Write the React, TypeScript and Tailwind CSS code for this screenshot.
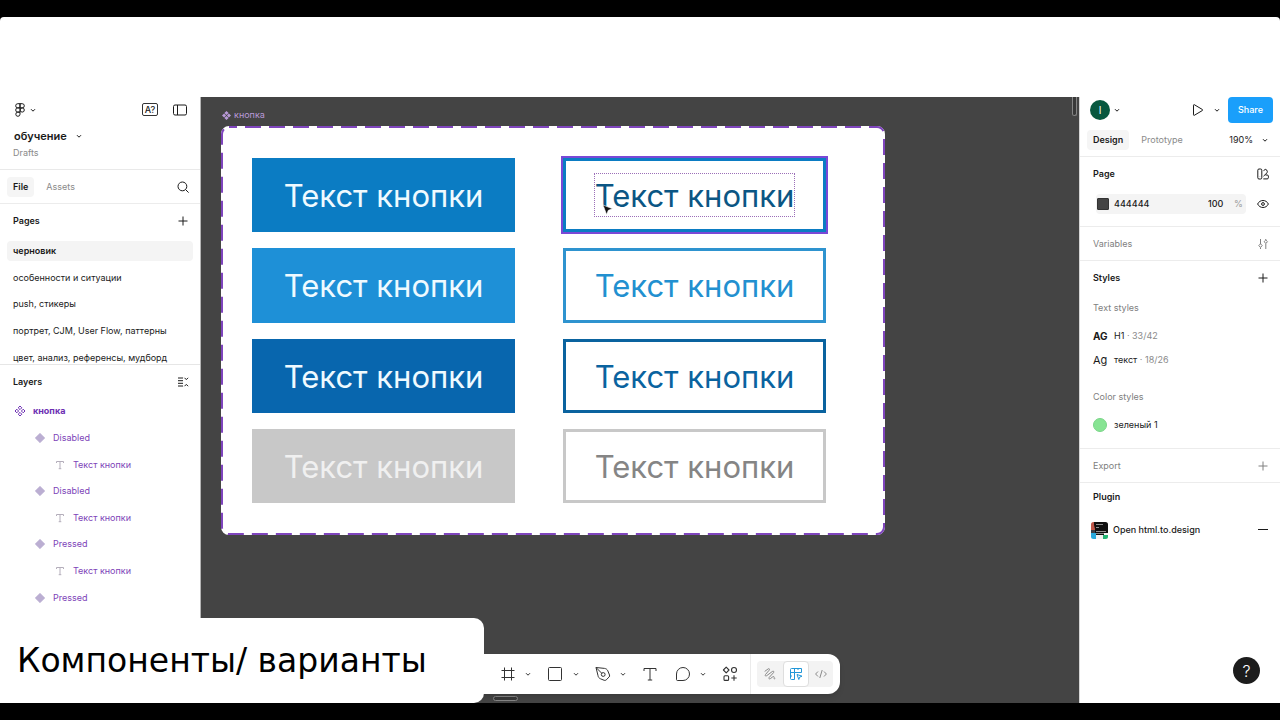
import React from 'react';

type IconProps = { className?: string };

const Chevron = ({ className = '' }: IconProps) => (
  <svg className={`h-2 w-2 shrink-0 ${className}`} viewBox="0 0 8 8" fill="none" stroke="currentColor" strokeWidth="1">
    <path d="M2 3.2l2 2 2-2" />
  </svg>
);

const FigmaIcon = () => (
  <svg className="h-4 w-3" viewBox="0 0 12 16" fill="none" stroke="currentColor" strokeWidth="1">
    <path d="M6 1.7H3.8a2.1 2.1 0 000 4.2H6zM6 1.7h2.2a2.1 2.1 0 010 4.2H6zM6 5.9H3.8a2.1 2.1 0 000 4.2H6zM3.8 10.1A2.1 2.1 0 106 12.2v-2.1z" />
    <circle cx="8.2" cy="8" r="2.1" />
  </svg>
);

const PanelIcon = () => (
  <svg className="h-4 w-4" viewBox="0 0 16 16" fill="none" stroke="currentColor" strokeWidth="1">
    <rect x="1.5" y="3" width="13" height="10" rx="1.5" />
    <path d="M5.5 3v10" />
  </svg>
);

const SearchIcon = () => (
  <svg className="h-3 w-3" viewBox="0 0 12 12" fill="none" stroke="currentColor" strokeWidth="1">
    <circle cx="5.4" cy="5.4" r="4.4" />
    <path d="M8.6 8.6l3 3" />
  </svg>
);

const PlusIcon = ({ className = '' }: IconProps) => (
  <svg className={`h-3 w-3 ${className}`} viewBox="0 0 12 12" fill="none" stroke="currentColor" strokeWidth="1">
    <path d="M6 1.5v9M1.5 6h9" />
  </svg>
);

const CollapseIcon = () => (
  <svg className="h-3 w-3" viewBox="0 0 12 12" fill="none" stroke="currentColor" strokeWidth="1">
    <path d="M1 2h5M1 4.7h5M1 7.3h5M1 10h5M7.5 1.8l1.8 1.8 1.8-1.8M7.5 10.2l1.8-1.8 1.8 1.8" />
  </svg>
);

const ComponentSetIcon = ({ className = '' }: IconProps) => (
  <svg className={className} viewBox="0 0 12 12" fill="none" stroke="currentColor" strokeWidth="1">
    <path d="M6 1l1.8 1.8L6 4.6 4.2 2.8zM6 7.4l1.8 1.8L6 11 4.2 9.2zM2.8 4.2L4.6 6 2.8 7.8 1 6zM9.2 4.2L11 6 9.2 7.8 7.4 6z" />
  </svg>
);

const ComponentSetSolid = ({ className = '' }: IconProps) => (
  <svg className={className} viewBox="0 0 12 12" fill="currentColor">
    <path d="M6 0l2.800 2.800L6 5.400 3.200 2.800zM6 6.600l2.800 2.600L6 12 3.200 9.200zM2.800 3.200L5.400 6 2.800 8.800 0 6zM9.200 3.200L12 6 9.200 8.800 6.600 6z" />
  </svg>
);

const VariantIcon = () => (
  <svg className="h-3 w-3 text-[#bbaed2]" viewBox="0 0 12 12" fill="currentColor">
    <path d="M6 1.2L10.8 6 6 10.8 1.2 6z" stroke="currentColor" strokeWidth=".6" strokeLinejoin="round" />
  </svg>
);

const TextLayerIcon = () => (
  <svg className="h-3 w-3 text-[#b4aebb]" viewBox="0 0 12 12" fill="none" stroke="currentColor" strokeWidth="1">
    <path d="M2.5 4V2.5h7V4M6 2.5v7.2M4.7 9.7h2.6" />
  </svg>
);

const PlayIcon = () => (
  <svg className="h-4 w-4" viewBox="0 0 16 16" fill="none" stroke="currentColor" strokeWidth="1" strokeLinejoin="round">
    <path d="M3.5 3.2v9.6c0 .5.4.7.8.5l8.1-4.8c.4-.2.4-.7 0-1L4.3 2.7c-.4-.2-.8 0-.8.5z" />
  </svg>
);

const LibraryIcon = () => (
  <svg className="h-3 w-3" viewBox="0 0 12 12" fill="none" stroke="currentColor" strokeWidth="1" strokeLinejoin="round">
    <rect x=".8" y="1" width="4" height="10" rx="1.2" />
    <path d="M6.5 2.6l1.7-1.1c.5-.3 1-.2 1.3.3l.8 1.6c.2.5.1 1-.3 1.4L6.5 8.2M8.5 7h1.7c.7 0 1.2.4 1.2 1.1v1.6c0 .7-.5 1.2-1.2 1.2H6.3" />
    <path d="M2.8 8.8v.2" />
  </svg>
);

const EyeIcon = () => (
  <svg className="h-3 w-3" viewBox="0 0 12 12" fill="none" stroke="currentColor" strokeWidth="1">
    <path d="M.6 6C1.8 3.7 3.7 2.5 6 2.5S10.2 3.7 11.4 6C10.2 8.3 8.3 9.5 6 9.5S1.8 8.3.6 6z" />
    <circle cx="6" cy="6" r="1.4" />
  </svg>
);

const SlidersIcon = () => (
  <svg className="h-3 w-3" viewBox="0 0 12 12" fill="none" stroke="currentColor" strokeWidth="1">
    <path d="M3.5 1v5M3.5 9.5V11M8.8 1v1M8.8 5.500V11" />
    <path d="M3.5 5.8l1.7 1.8-1.7 1.8-1.7-1.8zM8.8 2l1.7 1.7-1.7 1.7-1.7-1.7z" />
  </svg>
);

const PluginIcon = () => (
  <svg className="h-[17px] w-[17px]" viewBox="0 0 17 17">
    <rect width="17" height="17" rx="2.5" fill="#f2f2f2" />
    <path d="M0 2.5A2.5 2.5 0 012.5 0H5v8H0z" fill="#c0584a" />
    <path d="M3 0h11.5A2.5 2.5 0 0117 2.5V11H4V7L3 3z" fill="#101010" />
    <path d="M0 8h4v3H0z" fill="#3b3f46" />
    <path d="M0 11h5v6H2.5A2.5 2.5 0 010 14.5z" fill="#28a9dc" />
    <path d="M12 13h5v1.5a2.5 2.5 0 01-2.5 2.5H12z" fill="#22b573" />
    <path d="M5 2.500h7M5 5.500h3M5 9.500h10" stroke="#8f8f8f" strokeWidth="1" />
    <path d="M5 11.500h8v1.500H5z" fill="#101010" />
  </svg>
);

const FrameIcon = () => (
  <svg className="h-4 w-4" viewBox="0 0 16 16" fill="none" stroke="currentColor" strokeWidth="1">
    <path d="M4.5 1.5v13M11.5 1.5v13M1.5 4.5h13M1.5 11.5h13" />
  </svg>
);

const SquareIcon = () => (
  <svg className="h-4 w-4" viewBox="0 0 16 16" fill="none" stroke="currentColor" strokeWidth="1">
    <rect x="1.5" y="1.5" width="13" height="13" rx="1" />
  </svg>
);

const PenIcon = () => (
  <svg className="h-4 w-4" viewBox="0 0 16 16" fill="none" stroke="currentColor" strokeWidth="1" strokeLinejoin="round">
    <path d="M1 1.500l8.500.9c1.500.2 2.700 1 3.300 2.400l1.700 4.200c.3.8.1 1.500-.4 2l-2.900 2.900c-.6.5-1.300.7-2 .4l-3.700-1.500C4 12.200 3.200 11 3 9.600zM1.200 1.700l5.500 5.500" />
    <circle cx="8.2" cy="8.5" r="1.9" />
  </svg>
);

const TextIcon = () => (
  <svg className="h-4 w-4" viewBox="0 0 16 16" fill="none" stroke="currentColor" strokeWidth="1">
    <path d="M2 5V2.500h12V5M8 2.500v11.500M5.800 14h4.400" />
  </svg>
);

const CommentIcon = () => (
  <svg className="h-4 w-4" viewBox="0 0 16 16" fill="none" stroke="currentColor" strokeWidth="1" strokeLinejoin="round">
    <path d="M8 1.500a6.500 6.500 0 110 13H2.300c-.4 0-.8-.4-.8-.8V8A6.500 6.500 0 018 1.500z" />
  </svg>
);

const ActionsIcon = () => (
  <svg className="h-4 w-4" viewBox="0 0 16 16" fill="none" stroke="currentColor" strokeWidth="1.1" strokeLinejoin="round">
    <path d="M4.200 1.200L7 4 4.200 6.800 1.400 4z" />
    <circle cx="12" cy="4" r="2.5" />
    <rect x="2" y="9.8" width="4.6" height="4.6" rx="1" />
    <path d="M12 9.300v5.400M9.300 12h5.400" />
  </svg>
);

const DrawIcon = () => (
  <svg className="h-3.5 w-3.5" viewBox="0 0 14 14" fill="none" stroke="currentColor" strokeWidth="1" strokeLinecap="round" strokeLinejoin="round">
    <path d="M2 4.200L5 2c1.200-.9 2 .2 1.200 1.200L2.500 7.500c-.9 1.100.1 2 1.200 1.200l5.600-4.200c1.200-.9 2.100.2 1.200 1.200l-4.300 4.700c-.9 1.100.1 2 1.200 1.200l2.400-1.800c1-.7 1.800.1 1.300 1-.5.8.1 1.300.8.9" />
  </svg>
);

const DesignModeIcon = () => (
  <svg className="h-3.5 w-3.5" viewBox="0 0 14 14" fill="none" stroke="currentColor" strokeWidth="1" strokeLinejoin="round">
    <path d="M5.500 12.500h-3a1 1 0 01-1-1v-9a1 1 0 011-1h10v4h-7zM5.500 1.500v4h-4M9 1.500V3M1.500 9H3M8 7.500l5 1.700-2.300.9-.9 2.400z" />
  </svg>
);

const CodeIcon = () => (
  <svg className="h-3 w-3" viewBox="0 0 12 12" fill="none" stroke="currentColor" strokeWidth="1">
    <path d="M3 3.500L.6 6 3 8.500M9 3.500L11.400 6 9 8.500M7.200 2L4.800 10" />
  </svg>
);

const pages = [
  'черновик',
  'особенности и ситуации',
  'push, стикеры',
  'портрет, CJM, User Flow, паттерны',
  'цвет, анализ, референсы, мудборд',
];

const layers = [
  { name: 'Disabled', type: 'variant' },
  { name: 'Текст кнопки', type: 'text' },
  { name: 'Disabled', type: 'variant' },
  { name: 'Текст кнопки', type: 'text' },
  { name: 'Pressed', type: 'variant' },
  { name: 'Текст кнопки', type: 'text' },
  { name: 'Pressed', type: 'variant' },
];

const variants = [
  'bg-[#0b7cc3] text-[#effaff]',
  'border-3 border-[#0b7cc3] text-[#0b5684] outline-2 outline-[#7a48d6]',
  'bg-[#1e90d7] text-[#effaff]',
  'border-3 border-[#2e93cf] text-[#2290d0]',
  'bg-[#0866ae] text-[#effaff]',
  'border-3 border-[#0a639f] text-[#0a639f]',
  'bg-[#c8c8c8] text-[#f0f0f0]',
  'border-3 border-[#c8c8c8] text-[#858585]',
];

const LeftPanel = () => (
  <aside className="w-[201px] shrink-0 border-r border-[#b5b5b5] bg-white">
    <div className="flex h-[25px] items-center pr-3 pl-[14px]">
      <button aria-label="Main menu" className="flex items-center gap-[3px]">
        <FigmaIcon />
        <Chevron />
      </button>
      <button aria-label="Missing fonts" className="ml-auto flex h-[13px] w-4 items-center justify-center rounded-[2px] border border-[#333] text-[9px] leading-none font-medium">
        A?
      </button>
      <button aria-label="Toggle panels" className="ml-3.5">
        <PanelIcon />
      </button>
    </div>
    <div className="h-12 border-b border-[#e9e9e9] pt-1.5 pl-3.5">
      <button className="flex items-center gap-2 text-[11px] leading-4 font-semibold">
        обучение
        <Chevron />
      </button>
      <p className="-ml-px pt-px leading-4 text-[#8a8a8a]">Drafts</p>
    </div>
    <div className="flex h-[34px] items-center border-b border-[#ececec] pr-[11px] pl-[7px]">
      <button className="h-5 rounded bg-[#f5f5f5] px-1.5 font-semibold">File</button>
      <button className="ml-1.5 px-1.5 text-[#8a8a8a]">Assets</button>
      <button aria-label="Search" className="ml-auto">
        <SearchIcon />
      </button>
    </div>
    <div className="flex h-[34px] items-center justify-between pr-[11px] pl-[13px]">
      <h2 className="font-semibold">Pages</h2>
      <button aria-label="Add page">
        <PlusIcon />
      </button>
    </div>
    <div className="h-[127px] overflow-hidden border-b border-[#e6e6e6]">
      <ul className="flex h-[133px] flex-col px-[7px]">
        {pages.map((page, i) => (
          <li key={page} className="flex flex-1 items-center">
            <button className={`h-5 w-full rounded-sm px-1.5 text-left whitespace-nowrap ${i === 0 ? 'bg-[#f4f4f4] font-semibold' : ''}`}>
              {page}
            </button>
          </li>
        ))}
      </ul>
    </div>
    <div className="flex h-[33px] items-center justify-between pr-[11px] pl-[13px]">
      <h2 className="font-semibold">Layers</h2>
      <button aria-label="Collapse layers">
        <CollapseIcon />
      </button>
    </div>
    <ul className="flex h-[213px] flex-col text-[#7d43b8]">
      <li className="flex flex-1 items-center gap-[7px] pl-3.5 font-bold text-[#6d2fb3]">
        <ComponentSetIcon className="h-3 w-3" />
        кнопка
      </li>
      {layers.map((layer, i) => (
        <li key={i} className={`flex flex-1 items-center gap-[7px] ${layer.type === 'text' ? 'pl-[54px]' : 'pl-[34px]'}`}>
          {layer.type === 'text' ? <TextLayerIcon /> : <VariantIcon />}
          {layer.name}
        </li>
      ))}
    </ul>
  </aside>
);

const Toolbar = () => (
  <div className="absolute bottom-[9px] left-1/2 flex h-10 w-[400px] -translate-x-1/2 items-center justify-end rounded-xl bg-white pr-[7px] text-[#333] shadow-md">
    <button aria-label="Frame" className="flex items-center gap-2">
      <FrameIcon />
      <Chevron />
    </button>
    <button aria-label="Rectangle" className="ml-[15px] flex items-center gap-[9px]">
      <SquareIcon />
      <Chevron />
    </button>
    <button aria-label="Pen" className="ml-[15px] flex items-center gap-2">
      <PenIcon />
      <Chevron />
    </button>
    <button aria-label="Text" className="ml-[15px]">
      <TextIcon />
    </button>
    <button aria-label="Comment" className="ml-[17px] flex items-center gap-2">
      <CommentIcon />
      <Chevron />
    </button>
    <button aria-label="Actions" className="ml-[15px]">
      <ActionsIcon />
    </button>
    <div className="ml-3 h-full w-px bg-[#ebebeb]" />
    <div className="ml-1.5 flex h-[26px] items-center rounded bg-[#f3f3f3] text-[#8a8a8a]">
      <button aria-label="Draw" className="flex h-[26px] w-[26px] items-center justify-center">
        <DrawIcon />
      </button>
      <button aria-label="Design" className="flex h-[26px] w-[26px] items-center justify-center rounded border border-[#dedede] bg-white text-[#2196d8]">
        <DesignModeIcon />
      </button>
      <button aria-label="Dev Mode" className="flex h-[26px] w-6 items-center justify-center">
        <CodeIcon />
      </button>
    </div>
  </div>
);

const Canvas = () => (
  <main className="relative min-w-0 flex-1 bg-[#444] pl-[21px]">
    <div className="flex h-[30px] items-center gap-[3px] pt-1.5 text-[#b99ad8]">
      <ComponentSetSolid className="h-[9px] w-[9px]" />
      <span>кнопка</span>
    </div>
    <div className="relative w-[662px] rounded-lg bg-white px-[30px] py-[31px]">
      <svg className="absolute inset-0 h-full w-full overflow-visible" fill="none">
        <rect width="662" height="407" rx="7" stroke="#fff" strokeWidth="2" />
        <rect width="662" height="407" rx="7" stroke="#7f45bd" strokeWidth="2" strokeDasharray="16 8" strokeDashoffset="8" />
      </svg>
      <div className="relative grid h-[345px] grid-cols-[263px_263px] gap-x-12 gap-y-4">
        {variants.map((style, i) => (
          <button key={i} className={`relative flex items-center justify-center pt-px text-[31px] leading-none ${style}`}>
            Текст кнопки
            {i === 1 && <span className="absolute top-3 left-7 h-11 w-[201px] border border-dotted border-[#9b6fb8]" />}
            {i === 1 && (
              <svg className="absolute top-[43px] left-9 h-3 w-3" viewBox="0 0 12 12">
                <path d="M1 1l9.500 3.800-4.200 1.500L4.600 10.500z" fill="#111" stroke="#fff" strokeWidth=".6" />
              </svg>
            )}
          </button>
        ))}
      </div>
    </div>
    <div className="absolute top-0 right-0.5 h-[19px] w-[5px] rounded-b-sm border border-t-0 border-[#858585] bg-[#383838]" />
    <div className="absolute bottom-0.5 left-[292px] h-[5px] w-[25px] rounded-sm border border-[#858585] bg-[#383838]" />
    <Toolbar />
  </main>
);

const RightPanel = () => (
  <aside className="relative w-[201px] shrink-0 border-l border-[#d5d5d5] bg-white">
    <div className="flex h-[26px] items-center pr-[7px] pl-2.5">
      <button aria-label="Account" className="flex items-center gap-[3px]">
        <span className="flex h-5 w-5 items-center justify-center rounded-full bg-[#08583f] text-[10px] text-white">I</span>
        <Chevron />
      </button>
      <button aria-label="Present" className="ml-auto flex items-center gap-[7px]">
        <PlayIcon />
        <Chevron />
      </button>
      <button className="ml-[7px] h-[26px] w-[45px] rounded bg-[#1a9ffb] font-medium text-white">Share</button>
    </div>
    <div className="flex h-[34px] items-center border-b border-[#ececec] pr-[11px] pl-[7px]">
      <button className="h-5 rounded bg-[#f5f5f5] px-1.5 font-semibold">Design</button>
      <button className="ml-1.5 px-1.5 text-[#8a8a8a]">Prototype</button>
      <button className="ml-auto flex items-center gap-2">
        190%
        <Chevron />
      </button>
    </div>
    <section className="h-[70px] border-b border-[#ececec] pr-[11px] pl-[13px]">
      <div className="flex h-[34px] items-center justify-between">
        <h2 className="font-semibold">Page</h2>
        <button aria-label="Libraries">
          <LibraryIcon />
        </button>
      </div>
      <div className="flex h-[26px] items-center justify-between">
        <div className="ml-[3px] flex h-5 w-[150px] items-center rounded bg-[#f4f4f4] pl-px">
          <span className="mr-[5px] h-3 w-3 rounded-[1px] border border-[#333] bg-[#444]" />
          <input aria-label="Page color" defaultValue="444444" className="w-0 flex-1 bg-transparent font-medium outline-none" />
          <input aria-label="Opacity" defaultValue="100" className="w-[26px] bg-transparent font-medium outline-none" />
          <span className="w-3 text-[#999]">%</span>
        </div>
        <button aria-label="Toggle page color">
          <EyeIcon />
        </button>
      </div>
    </section>
    <section className="flex h-[34px] items-center justify-between border-b border-[#ececec] pr-[11px] pl-[13px] text-[#808080]">
      <h2>Variables</h2>
      <button aria-label="Edit variables">
        <SlidersIcon />
      </button>
    </section>
    <section className="h-[188px] border-b border-[#ececec] pr-[11px] pl-[13px]">
      <div className="flex h-[34px] items-center justify-between">
        <h2 className="font-semibold">Styles</h2>
        <button aria-label="Add style">
          <PlusIcon />
        </button>
      </div>
      <h3 className="flex h-[26px] items-center text-[#808080]">Text styles</h3>
      <div className="flex h-[29px] items-center">
        <span className="w-[21px] text-[10px] font-bold">AG</span>
        <span>H1 <span className="text-[#8a8a8a]">· 33/42</span></span>
      </div>
      <div className="flex h-5 items-center">
        <span className="w-[21px] text-[11px]">Ag</span>
        <span>текст <span className="text-[#8a8a8a]">· 18/26</span></span>
      </div>
      <h3 className="mt-3.5 flex h-[26px] items-center text-[#808080]">Color styles</h3>
      <div className="flex h-[29px] items-center">
        <span className="mr-[7px] h-3.5 w-3.5 rounded-full border border-[#7ad588] bg-[#87e493]" />
        зеленый 1
      </div>
    </section>
    <section className="flex h-[34px] items-center justify-between border-b border-[#ececec] pr-[11px] pl-[13px] text-[#808080]">
      <h2>Export</h2>
      <button aria-label="Add export">
        <PlusIcon />
      </button>
    </section>
    <section className="pr-[11px] pl-[13px]">
      <h2 className="flex h-7 items-center font-semibold">Plugin</h2>
      <div className="-ml-0.5 flex h-[38px] items-center">
        <PluginIcon />
        <button className="ml-[5px] font-medium">Open html.to.design</button>
        <button aria-label="Remove plugin" className="ml-auto">
          <svg className="h-3 w-3" viewBox="0 0 12 12" stroke="currentColor" strokeWidth="1">
            <path d="M1 5.500h10" />
          </svg>
        </button>
      </div>
    </section>
    <button aria-label="Help" className="absolute right-5 bottom-[19px] flex h-[27px] w-[27px] items-center justify-center rounded-full bg-[#1c1c1c] text-base font-light text-white">
      ?
    </button>
  </aside>
);

export default function App() {
  return (
    <div className="flex min-h-screen flex-col bg-black py-[17px] font-['Inter',sans-serif] text-[9px] leading-3 text-[#1a1a1a]">
      <div className="relative flex flex-1 flex-col rounded-t bg-white pt-20">
        <div className="flex flex-1">
          <LeftPanel />
          <Canvas />
          <RightPanel />
        </div>
        <div className="absolute bottom-0 left-0 flex h-[85px] w-[484px] items-center rounded-r-[10px] bg-white pl-[17px]">
          <h1 className="font-['DejaVu_Sans',sans-serif] text-[33px] leading-10 whitespace-nowrap text-black">Компоненты/ варианты</h1>
        </div>
      </div>
    </div>
  );
}
